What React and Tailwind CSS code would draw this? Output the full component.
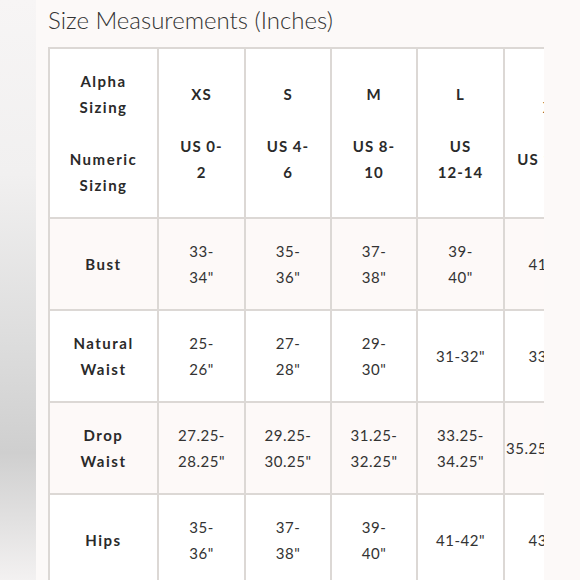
import React from "react";

const cols = ["XS", "S", "M", "L", "XL"];
const numeric = [["US 0-", "2"], ["US 4-", "6"], ["US 8-", "10"], ["US", "12-14"], ["US 16-18"]];
const rows = [
  { label: ["Bust"], vals: [["33-", "34\""], ["35-", "36\""], ["37-", "38\""], ["39-", "40\""], ["41-42\""]], tint: true },
  { label: ["Natural", "Waist"], vals: [["25-", "26\""], ["27-", "28\""], ["29-", "30\""], ["31-32\""], ["33-34\""]], tint: false },
  { label: ["Drop", "Waist"], vals: [["27.25-", "28.25\""], ["29.25-", "30.25\""], ["31.25-", "32.25\""], ["33.25-", "34.25\""], ["35.25-36.25\""]], tint: true },
  { label: ["Hips"], vals: [["35-", "36\""], ["37-", "38\""], ["39-", "40\""], ["41-42\""], ["43-44\""]], tint: false },
];

function Lines({ lines }) {
  return lines.map((l, i) => (
    <div key={i} className="whitespace-nowrap">{l === "" ? "\u00a0" : l}</div>
  ));
}

export default function App() {
  return (
    <div className="w-[580px] h-[580px] flex overflow-hidden bg-[#fbf8f7]">
      <div className="w-[36px] h-full bg-[linear-gradient(to_bottom,#f7f5f5_0%,#f1f0f0_30%,#dcdcdc_60%,#cfcfcf_78%,#e2e1e1_90%,#f3f1f1_100%)]" />
      <div className="flex-1 flex flex-col pl-[12px] bg-[#fcf9f8]">
        <h1 className="h-[48px] pt-[4px] text-[24px] leading-[32px] font-light text-[#333] font-['Lato',sans-serif]">
          Size Measurements (Inches)
        </h1>
        <div className="w-[496px] overflow-hidden">
          <div className="grid w-max grid-cols-[107px_85px_84px_84px_85px_96px] grid-rows-[168px_90px_90px_90px_90px] gap-[2px] p-[2px] bg-[#dcd8d5] font-['Lato',sans-serif] text-[#333] text-[15px] leading-[26px]">
            <div className="bg-white flex flex-col items-center justify-center text-center font-bold tracking-[1.5px] text-[#2a2a2a]">
              <Lines lines={["Alpha", "Sizing", "", "Numeric", "Sizing"]} />
            </div>
            {cols.map((c, i) => (
              <div key={c} className="bg-white flex flex-col items-center justify-center text-center font-bold tracking-[1px] text-[#2a2a2a]">
                <Lines lines={[c, "", ...numeric[i]]} />
              </div>
            ))}
            {rows.map((r) => (
              <React.Fragment key={r.label.join(" ")}>
                <div className={`${r.tint ? "bg-[#fdf9f8]" : "bg-white"} flex flex-col items-center justify-center text-center font-bold tracking-[1.5px] text-[#2a2a2a]`}>
                  <Lines lines={r.label} />
                </div>
                {r.vals.map((v, j) => (
                  <div key={j} className={`${r.tint ? "bg-[#fdf9f8]" : "bg-white"} flex flex-col items-center justify-center text-center tracking-[0.5px]`}>
                    <Lines lines={v} />
                  </div>
                ))}
              </React.Fragment>
            ))}
          </div>
        </div>
      </div>
    </div>
  );
}
